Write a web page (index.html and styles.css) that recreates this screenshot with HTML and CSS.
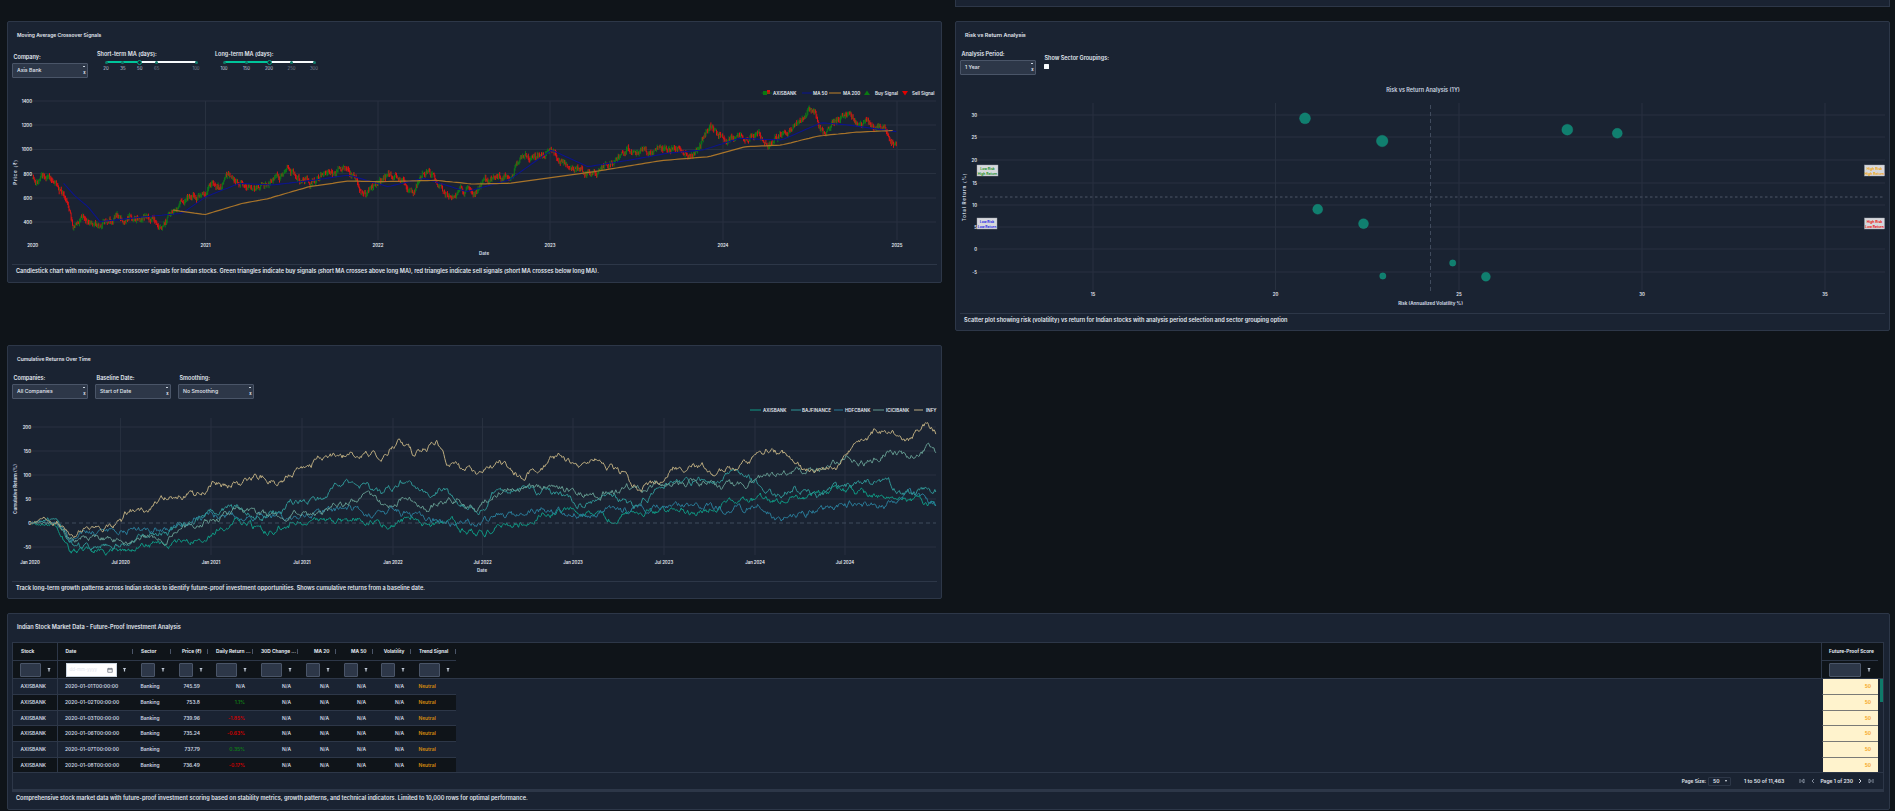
FILE: index.html
```html
<!DOCTYPE html>
<html lang="en">
<head>
<meta charset="utf-8">
<title>Indian Stock Market Dashboard</title>
<link rel="stylesheet" href="styles.css">
</head>
<body>
<main class="layout">
  <div></div>
  <div class="panel-stub"></div>

  <section class="panel panel-signals">
    <h3 class="panel-title">Moving Average Crossover Signals</h3>
    <div class="controls">
      <div class="field field-low">
        <label class="label">Company:</label>
        <div class="select">Axis Bank<span class="select-caret"></span><span class="select-clear">x</span></div>
      </div>
      <div class="slider-field">
        <label class="label">Short-term MA (days):</label>
        <div class="slider">
          <div class="slider-track"><div class="slider-fill" style="width:37.5%"></div>
            <i class="dot" style="left:0"></i><i class="dot" style="left:18.75%"></i><i class="dot" style="left:56.25%"></i><i class="dot" style="left:100%"></i><i class="handle" style="left:37.5%"></i>
          </div>
          <div class="ticks"><span style="left:0">20</span><span style="left:18.75%">35</span><span style="left:37.5%">50</span><span class="tick-dim" style="left:56.25%">65</span><span class="tick-dim" style="left:100%">100</span></div>
        </div>
      </div>
      <div class="slider-field">
        <label class="label">Long-term MA (days):</label>
        <div class="slider">
          <div class="slider-track"><div class="slider-fill" style="width:50%"></div>
            <i class="dot" style="left:0"></i><i class="dot" style="left:25%"></i><i class="dot" style="left:75%"></i><i class="dot" style="left:100%"></i><i class="handle" style="left:50%"></i>
          </div>
          <div class="ticks"><span style="left:0">100</span><span style="left:25%">150</span><span style="left:50%">200</span><span class="tick-dim" style="left:75%">250</span><span class="tick-dim" style="left:100%">300</span></div>
        </div>
      </div>
    </div>
    <svg class="chart chart-signals" viewBox="12 79 925 185">
      <g class="grid">
        <path d="M32 101H936M32 125H936M32 149.500H936M32 173.500H936M32 198H936M32 222H936"/>
        <path d="M205.500 101V240M378 101V240M550 101V240M723 101V240M897 101V240"/>
      </g>
      <g class="tick-text" text-anchor="end">
        <text x="32" y="103">1400</text><text x="32" y="127">1200</text><text x="32" y="151">1000</text><text x="32" y="175.500">800</text><text x="32" y="200">600</text><text x="32" y="224">400</text>
      </g>
      <g class="tick-text" text-anchor="middle">
        <text x="32.700" y="247">2020</text><text x="205.500" y="247">2021</text><text x="378" y="247">2022</text><text x="550" y="247">2023</text><text x="723" y="247">2024</text><text x="897" y="247">2025</text>
      </g>
      <text class="axis-title" x="484" y="255" text-anchor="middle">Date</text>
      <text class="axis-title axis-wide" transform="translate(17 172) rotate(-90)" text-anchor="middle">Price (₹)</text>
      <g id="candles"></g>
      <polyline id="ma50" class="line-ma50"/>
      <polyline id="ma200" class="line-ma200"/>
      <g class="legend">
        <path class="leg-up" d="M763 91h4v4h-4z"/><path class="leg-down" d="M767 90h3v4h-3z"/><path class="leg-stem" d="M761.500 93H772"/>
        <text x="773" y="95">AXISBANK</text>
        <path class="line-ma50" d="M802 93H812"/><text x="813" y="95">MA 50</text>
        <path class="line-ma200" d="M829 93H841"/><text x="843" y="95">MA 200</text>
        <path class="buy" d="M867 90.500l3 4.500h-6z"/><text x="875" y="95">Buy Signal</text>
        <path class="sell" d="M905 95.500l-3-4.500h6z"/><text x="912" y="95">Sell Signal</text>
      </g>
    </svg>
    <p class="caption">Candlestick chart with moving average crossover signals for Indian stocks. Green triangles indicate buy signals (short MA crosses above long MA), red triangles indicate sell signals (short MA crosses below long MA).</p>
  </section>

  <section class="panel">
    <h3 class="panel-title title-md">Risk vs Return Analysis</h3>
    <div class="controls">
      <div class="field">
        <label class="label">Analysis Period:</label>
        <div class="select">1 Year<span class="select-caret"></span><span class="select-clear">x</span></div>
      </div>
      <div class="field field-check">
        <label class="label">Show Sector Groupings:</label>
        <span class="checkbox"></span>
      </div>
    </div>
    <svg class="chart chart-risk" viewBox="960 75 925 238">
      <g class="grid">
        <path d="M978 115H1885M978 137H1885M978 160H1885M978 183H1885M978 205H1885M978 227H1885M978 249H1885M978 272H1885"/>
        <path d="M1093 103V290M1275.500 103V290M1459 103V290M1642 103V290M1825 103V290"/>
      </g>
      <path class="ref-v" d="M1430.500 105V291"/>
      <path class="ref-h" d="M980 197H1885"/>
      <g class="tick-text" text-anchor="end">
        <text x="977" y="117">30</text><text x="977" y="139">25</text><text x="977" y="162">20</text><text x="977" y="185">15</text><text x="977" y="207">10</text><text x="977" y="229">5</text><text x="977" y="251">0</text><text x="977" y="274">-5</text>
      </g>
      <g class="tick-text" text-anchor="middle">
        <text x="1093" y="296">15</text><text x="1275.500" y="296">20</text><text x="1459" y="296">25</text><text x="1642" y="296">30</text><text x="1825" y="296">35</text>
      </g>
      <text class="axis-title" x="1430.500" y="305" text-anchor="middle">Risk (Annualized Volatility %)</text>
      <text class="axis-title axis-wide" transform="translate(966 197) rotate(-90)" text-anchor="middle">Total Return (%)</text>
      <text class="chart-title" x="1423" y="92" text-anchor="middle">Risk vs Return Analysis (1Y)</text>
      <g class="bubbles">
        <circle cx="1305" cy="118.300" r="5.500"/><circle cx="1382.200" cy="141" r="5.800"/><circle cx="1567.300" cy="129.700" r="5.500"/><circle cx="1617.300" cy="133.300" r="5"/>
        <circle cx="1317.700" cy="209.300" r="5"/><circle cx="1363.500" cy="223.700" r="5"/><circle cx="1452.700" cy="263" r="3.200"/><circle cx="1382.800" cy="276" r="3.200"/><circle cx="1485.900" cy="276.700" r="4.500"/>
      </g>
      <g class="note note-green"><rect x="977" y="165" width="21" height="11"/><text x="987.500" y="169.500">Low Risk</text><text x="987.500" y="174.500">High Return</text></g>
      <g class="note note-blue"><rect x="977" y="218" width="20" height="11"/><text x="987" y="222.500">Low Risk</text><text x="987" y="227.500">Low Return</text></g>
      <g class="note note-orange"><rect x="1864.500" y="165" width="20" height="11"/><text x="1874.500" y="169.500">High Risk</text><text x="1874.500" y="174.500">High Return</text></g>
      <g class="note note-red"><rect x="1864.500" y="218" width="20" height="11"/><text x="1874.500" y="222.500">High Risk</text><text x="1874.500" y="227.500">Low Return</text></g>
    </svg>
    <p class="caption">Scatter plot showing risk (volatility) vs return for Indian stocks with analysis period selection and sector grouping option</p>
  </section>

  <section class="panel">
    <h3 class="panel-title">Cumulative Returns Over Time</h3>
    <div class="controls">
      <div class="field"><label class="label">Companies:</label><div class="select">All Companies<span class="select-caret"></span><span class="select-clear">x</span></div></div>
      <div class="field"><label class="label">Baseline Date:</label><div class="select">Start of Date<span class="select-caret"></span><span class="select-clear">x</span></div></div>
      <div class="field"><label class="label">Smoothing:</label><div class="select">No Smoothing<span class="select-caret"></span><span class="select-clear">x</span></div></div>
    </div>
    <svg class="chart chart-returns" viewBox="12 399 925 182">
      <g class="grid">
        <path d="M32 427H936M32 451H936M32 475H936M32 499H936M32 547H936"/>
        <path d="M120.600 418V555M211 418V555M302 418V555M393 418V555M482.500 418V555M573 418V555M664 418V555M755 418V555M845 418V555"/>
      </g>
      <g class="tick-text" text-anchor="end">
        <text x="31" y="429">200</text><text x="31" y="453">150</text><text x="31" y="477">100</text><text x="31" y="501">50</text><text x="31" y="525">0</text><text x="31" y="549">-50</text>
      </g>
      <g class="tick-text" text-anchor="middle">
        <text x="30" y="564">Jan 2020</text><text x="120.600" y="564">Jul 2020</text><text x="211" y="564">Jan 2021</text><text x="302" y="564">Jul 2021</text><text x="393" y="564">Jan 2022</text><text x="482.500" y="564">Jul 2022</text><text x="573" y="564">Jan 2023</text><text x="664" y="564">Jul 2023</text><text x="755" y="564">Jan 2024</text><text x="845" y="564">Jul 2024</text>
      </g>
      <text class="axis-title" x="482" y="572" text-anchor="middle">Date</text>
      <text class="axis-title" transform="translate(17 489) rotate(-90)" text-anchor="middle">Cumulative Return (%)</text>
      <polyline id="r-axis" class="r-line r-axis"/>
      <polyline id="r-hdfc" class="r-line r-hdfc"/>
      <polyline id="r-baj" class="r-line r-baj"/>
      <polyline id="r-icici" class="r-line r-icici"/>
      <polyline id="r-infy" class="r-line r-infy"/>
      <path class="zero" d="M30 523H936"/>
      <g class="legend">
        <path class="r-line r-axis" d="M750 410H761"/><text x="763" y="412">AXISBANK</text>
        <path class="r-line r-baj" d="M791 410H801"/><text x="802" y="412">BAJFINANCE</text>
        <path class="r-line r-hdfc" d="M834 410H843"/><text x="845" y="412">HDFCBANK</text>
        <path class="r-line r-icici" d="M873 410H884"/><text x="886" y="412">ICICIBANK</text>
        <path class="r-line r-infy" d="M914 410H923"/><text x="926" y="412">INFY</text>
      </g>
    </svg>
    <p class="caption">Track long-term growth patterns across Indian stocks to identify future-proof investment opportunities. Shows cumulative returns from a baseline date.</p>
  </section>
  <div></div>

  <section class="panel panel-wide">
    <h3 class="panel-title title-lg">Indian Stock Market Data - Future-Proof Investment Analysis</h3>
    <div class="data-grid">
      <div class="cols head-row">
        <div class="hcell pin">Stock</div><div class="hcell sep">Date</div><div class="hcell sep">Sector</div><div class="hcell sep num">Price (₹)</div><div class="hcell sep">Daily Return ...</div><div class="hcell sep">30D Change ...</div><div class="hcell sep num">MA 20</div><div class="hcell sep num">MA 50</div><div class="hcell sep num">Volatility</div><div class="hcell sep">Trend Signal</div>
        <div></div><div class="hcell score-head">Future-Proof Score</div><div></div>
      </div>
      <div class="cols filter-row">
        <div class="fcell pin"><input class="finput fw-21" aria-label="Stock"><i class="funnel"></i></div>
        <div class="fcell"><div class="date-input"><span>dd-mm-yyyy</span><svg viewBox="0 0 8 8" class="cal"><path d="M1 2h6v5H1zM1 3.500h6M2.500 1v1M5.500 1v1"/></svg></div><i class="funnel"></i></div>
        <div class="fcell"><input class="finput fw-14" aria-label="Sector"><i class="funnel"></i></div>
        <div class="fcell"><input class="finput fw-14" aria-label="Price"><i class="funnel"></i></div>
        <div class="fcell"><input class="finput fw-21" aria-label="Daily Return"><i class="funnel"></i></div>
        <div class="fcell"><input class="finput fw-21" aria-label="30D Change"><i class="funnel"></i></div>
        <div class="fcell"><input class="finput fw-14" aria-label="MA 20"><i class="funnel"></i></div>
        <div class="fcell"><input class="finput fw-14" aria-label="MA 50"><i class="funnel"></i></div>
        <div class="fcell"><input class="finput fw-14" aria-label="Volatility"><i class="funnel"></i></div>
        <div class="fcell"><input class="finput fw-21" aria-label="Trend Signal"><i class="funnel"></i></div>
        <div></div>
        <div class="fcell score-filter"><input class="finput fw-32" aria-label="Score"><i class="funnel"></i></div>
        <div></div>
      </div>
      <div class="grid-body">
        <div class="rows">
          <div class="cols-body">
            <div class="cell pin">AXISBANK</div><div class="cell">2020-01-01T00:00:00</div><div class="cell">Banking</div><div class="cell num">745.59</div><div class="cell num">N/A</div><div class="cell num">N/A</div><div class="cell num">N/A</div><div class="cell num">N/A</div><div class="cell num">N/A</div><div class="cell neutral">Neutral</div><div></div><div class="score">50</div>
          </div>
          <div class="cols-body dark">
            <div class="cell pin">AXISBANK</div><div class="cell">2020-01-02T00:00:00</div><div class="cell">Banking</div><div class="cell num">753.8</div><div class="cell num up">1.1%</div><div class="cell num">N/A</div><div class="cell num">N/A</div><div class="cell num">N/A</div><div class="cell num">N/A</div><div class="cell neutral">Neutral</div><div></div><div class="score">50</div>
          </div>
          <div class="cols-body">
            <div class="cell pin">AXISBANK</div><div class="cell">2020-01-03T00:00:00</div><div class="cell">Banking</div><div class="cell num">739.96</div><div class="cell num down">-1.85%</div><div class="cell num">N/A</div><div class="cell num">N/A</div><div class="cell num">N/A</div><div class="cell num">N/A</div><div class="cell neutral">Neutral</div><div></div><div class="score">50</div>
          </div>
          <div class="cols-body dark">
            <div class="cell pin">AXISBANK</div><div class="cell">2020-01-06T00:00:00</div><div class="cell">Banking</div><div class="cell num">735.24</div><div class="cell num down">-0.63%</div><div class="cell num">N/A</div><div class="cell num">N/A</div><div class="cell num">N/A</div><div class="cell num">N/A</div><div class="cell neutral">Neutral</div><div></div><div class="score">50</div>
          </div>
          <div class="cols-body">
            <div class="cell pin">AXISBANK</div><div class="cell">2020-01-07T00:00:00</div><div class="cell">Banking</div><div class="cell num">737.79</div><div class="cell num up">0.35%</div><div class="cell num">N/A</div><div class="cell num">N/A</div><div class="cell num">N/A</div><div class="cell num">N/A</div><div class="cell neutral">Neutral</div><div></div><div class="score">50</div>
          </div>
          <div class="cols-body dark">
            <div class="cell pin">AXISBANK</div><div class="cell">2020-01-08T00:00:00</div><div class="cell">Banking</div><div class="cell num">736.49</div><div class="cell num down">-0.17%</div><div class="cell num">N/A</div><div class="cell num">N/A</div><div class="cell num">N/A</div><div class="cell num">N/A</div><div class="cell neutral">Neutral</div><div></div><div class="score">50</div>
          </div>
        </div>
        <div class="scrollbar"><div class="scroll-thumb"></div></div>
      </div>
      <div class="pager">
        <span class="pg-label">Page Size:</span>
        <span class="pg-select">50<i class="pg-caret"></i></span>
        <span class="pg-range">1 to 50 of 11,463</span>
        <svg class="pg-icon dim" viewBox="0 0 6 6"><path d="M1 1v4M5 1L2.500 3 5 5z"/></svg>
        <svg class="pg-icon dim" viewBox="0 0 6 6"><path d="M4 1L2 3l2 2"/></svg>
        <span class="pg-page">Page 1 of 230</span>
        <svg class="pg-icon" viewBox="0 0 6 6"><path d="M2 1l2 2-2 2"/></svg>
        <svg class="pg-icon dim" viewBox="0 0 6 6"><path d="M5 1v4M1 1l2.500 2L1 5z"/></svg>
      </div>
    </div>
    <p class="caption caption-flat">Comprehensive stock market data with future-proof investment scoring based on stability metrics, growth patterns, and technical indicators. Limited to 10,000 rows for optimal performance.</p>
  </section>
</main>
<script src="charts.js"></script>
</body>
</html>
```
FILE: styles.css
```css
* { box-sizing: border-box; }
html, body { margin: 0; background: #0f1419; }
body { font-family: Inter, "Liberation Sans", sans-serif; color: #e2e8f0; overflow: hidden; height: 811px; }
.layout { display: grid; grid-template-columns: 1fr 1fr; gap: 14px 13px; padding: 0 5px 0 7px; align-items: start; }
.panel-stub { height: 7px; background: #1a2332; border: 1px solid #2d3748; border-top: 0; }
.panel { background: #1a2332; border: 1px solid #2d3748; border-radius: 2px; padding: 9px 4px 0; }
.panel-signals { height: 262px; }
.panel-wide { grid-column: 1 / -1; }
.panel-title { margin: 0 0 11px 5px; font-size: 5px; line-height: 8px; font-weight: 600; color: #e2e8f0; }
.title-md { font-size: 5.400px; }
.title-lg { font-size: 5.600px; }
.controls { display: flex; gap: 7px; }
.field { width: 76px; }
.field-low { padding-top: 3px; margin-right: 2px; }
.field-check { padding-top: 4px; width: auto; }
.label { display: block; font-size: 5.500px; line-height: 8px; font-weight: 600; margin: 0 0 2px 1.500px; color: #e2e8f0; }
.select { position: relative; height: 15px; background: #2d3748; border: 1px solid #4a5568; border-radius: 1px; font-size: 5.200px; line-height: 13px; padding-left: 4px; font-weight: 500; color: #e2e8f0; }
.select-caret { position: absolute; right: 2px; top: 2px; width: 2px; height: 1px; background: #cbd5e0; }
.select-clear { position: absolute; right: 1.500px; top: 7px; font-size: 4px; line-height: 4px; font-weight: 700; color: #e2e8f0; }
.checkbox { display: block; width: 5px; height: 5px; margin: 1px 0 0 1px; background: #f7fafc; border-radius: 0.500px; }
.slider-field { width: 111px; height: 29px; }
.slider-field .label { margin: 0 0 3px; }
.slider { margin-left: 9px; width: 90px; }
.slider-track { position: relative; height: 2px; background: #f7fafc; border-radius: 1px; }
.slider-fill { height: 2px; background: #00c49a; }
.dot { position: absolute; top: -0.500px; width: 3px; height: 3px; margin-left: -1.500px; border-radius: 50%; background: #0f7a6a; }
.handle { position: absolute; top: -1.500px; width: 5px; height: 5px; margin-left: -2.500px; border-radius: 50%; background: #1a2332; border: 1px solid #00a887; }
.ticks { position: relative; height: 6px; margin-top: 2.500px; font-size: 4.300px; line-height: 6px; color: #cbd5e0; }
.ticks span { position: absolute; transform: translateX(-50%); }
.ticks .tick-dim { color: #7c8696; }
.chart { display: block; width: 925px; overflow: visible; }
.chart-signals { height: 185px; }
.chart-risk { height: 238px; }
.chart-returns { height: 182px; }
.chart text { font-family: Inter, "Liberation Sans", sans-serif; }
.grid path { fill: none; stroke: #283140; stroke-width: 1; }
.tick-text { font-size: 4.300px; font-weight: 600; fill: #e2e8f0; }
.axis-title { font-size: 4.500px; font-weight: 700; fill: #cbd5e0; }
.axis-wide { letter-spacing: .8px; }
.chart-title { font-size: 5.500px; font-weight: 600; fill: #cbd5e0; }
.legend text { font-size: 4.500px; font-weight: 600; fill: #e2e8f0; }
.leg-up { fill: #0a7a12; }
.leg-down { fill: #d81010; }
.leg-stem { stroke: #0a7a12; stroke-width: 0.700; fill: none; }
.line-ma50 { fill: none; stroke: #0c148c; stroke-width: 1.100; }
.line-ma200 { fill: none; stroke: #a8742a; stroke-width: 1.200; }
.buy { fill: #0a7a12; }
.sell { fill: #e00000; }
.candle-up { stroke: #0f7c16; stroke-width: 0.950; }
.candle-down { stroke: #e21212; stroke-width: 0.950; }
.ref-v { fill: none; stroke: #4a5568; stroke-width: 0.800; stroke-dasharray: 4 3; }
.ref-h { fill: none; stroke: #3c4656; stroke-width: 1.500; stroke-dasharray: 2.500 2.500; }
.bubbles circle { fill: #0f8a75; fill-opacity: .9; stroke: #1aa38d; stroke-opacity: .4; stroke-width: .6; }
.note rect { fill: #d6d8dc; stroke: #a0a6b0; stroke-width: .4; }
.note text { font-size: 3.400px; font-weight: 600; text-anchor: middle; }
.note-green text { fill: #0a8a12; }
.note-blue text { fill: #1212e8; }
.note-orange text { fill: #f5a200; }
.note-red text { fill: #ee0000; }
.r-line { fill: none; stroke-width: 1; }
.r-axis { stroke: #0f9a85; }
.r-baj { stroke: #2f9696; }
.r-hdfc { stroke: #2a7d9a; }
.r-icici { stroke: #649a90; }
.r-infy { stroke: #bcac80; }
.zero { fill: none; stroke: #4a5568; stroke-width: .8; stroke-dasharray: 4 3; }
.caption { margin: 0; border-top: 1px solid #2d3748; padding: 2px 0 6px 4px; font-size: 5.600px; line-height: 8px; font-weight: 600; color: #e2e8f0; }
.caption-flat { border-top: 0; padding-bottom: 7px; }
.data-grid { border: 1px solid #2d3748; height: 150px; display: flex; flex-direction: column; margin-right: 1px; }
.cols, .cols-body { display: grid; grid-template-columns: 44.500px 75.500px 38px 37px 45px 45px 38px 37px 38px 45px 1fr 57px 5px; }
.cols-body { grid-template-columns: 44.500px 75.500px 38px 37px 45px 45px 38px 37px 38px 45px 1fr 56px; height: 15.800px; }
.head-row { height: 18px; background: #0f1419; }
.filter-row { height: 18px; background: #0f1419; border-bottom: 1px solid #2d3748; }
.head-row > .hcell { border-bottom: 1px solid #2d3748; }
.hcell { position: relative; font-size: 4.800px; line-height: 17px; font-weight: 700; color: #e2e8f0; padding: 0 2px 0 8px; white-space: nowrap; }
.hcell.num { text-align: right; padding: 0 6.500px 0 0; }
.sep::after { content: ""; position: absolute; right: 0; top: 6px; width: 1px; height: 5px; background: #4a5568; }
.pin { border-right: 1px solid #2d3748; }
.score-head { border-left: 1px solid #2d3748; padding: 0 0 0 7px; }
.fcell { display: flex; align-items: center; padding-left: 8px; height: 17px; }
.fcell.pin { padding-left: 7px; }
.score-filter { border-left: 1px solid #2d3748; padding-left: 7px; }
.finput { height: 14px; padding: 0; background: #2d3748; border: 1px solid #4a5568; border-radius: 1px; flex: none; }
.fw-14 { width: 14px; }
.fw-21 { width: 21px; }
.fw-32 { width: 32px; }
.funnel { flex: none; width: 4px; height: 4px; margin-left: 6px; background: #c3ccd9; clip-path: polygon(0 0, 100% 0, 65% 50%, 65% 100%, 35% 100%, 35% 50%); }
.date-input { flex: none; width: 51px; height: 14px; background: #fff; border: 1px solid #cbd5e0; display: flex; align-items: center; justify-content: space-between; padding: 0 3px; font-size: 4.500px; color: #dfe6ee; }
.cal { width: 6px; height: 6px; fill: none; stroke: #5a6270; stroke-width: .9; }
.grid-body { height: 93px; overflow: hidden; display: flex; }
.rows { flex: 1; min-width: 0; }
.cell { font-size: 4.900px; line-height: 14.800px; font-weight: 600; padding: 0 8px 0 7.500px; color: #cbd5e0; border-bottom: 1px solid #2d3748; white-space: nowrap; }
.cell.num { text-align: right; padding: 0 8px 0 0; }
.cols-body > .cell:nth-child(n+6).num { padding-right: 7px; }
.dark .cell { background: #0f1419; }
.up { color: #0f7c16 !important; }
.down { color: #d40000 !important; }
.neutral { color: #d68a0e; }
.score { background: #fff3cd; border-bottom: 1px solid #7a7a76; border-left: 1px solid #1a2332; font-size: 4.800px; line-height: 14.800px; font-weight: 700; text-align: right; padding-right: 7px; color: #f5a623; }
.scrollbar { width: 5px; flex: none; padding-left: 2px; }
.scroll-thumb { width: 3px; height: 23px; background: #0f7a6a; }
.pager { flex: 1; border-top: 1px solid #2d3748; border-bottom: 2px solid #2d3748; display: flex; align-items: center; justify-content: flex-end; padding-right: 6.500px; font-size: 5px; font-weight: 600; color: #e2e8f0; }
.pg-label { font-size: 4.800px; }
.pg-select { display: flex; align-items: center; justify-content: space-between; width: 23px; height: 9px; margin: 0 13px 0 2px; padding: 0 3px 0 4px; border: 1px solid #2d3748; border-radius: 1px; }
.pg-caret { width: 0; height: 0; border: 1.500px solid transparent; border-top: 2px solid #e2e8f0; border-bottom: 0; }
.pg-range { margin-right: 12.500px; font-size: 5.200px; }
.pg-page { margin: 0 1.500px; }
.pg-icon { width: 6px; height: 6px; margin: 0 2.500px; fill: none; stroke: #e2e8f0; stroke-width: .9; }
.pg-icon.dim { stroke: #8b95a5; }
```
FILE: charts.js
```js
(function () {
  var seed = 12345;
  function rnd() {
    seed = (seed * 1664525 + 1013904223) >>> 0;
    return seed / 4294967296;
  }
  // Reference traces are kept as [x, y] on a 1.65x-wide, 3x-tall grid.
  function lerp(pts, x) {
    for (var i = 1; i < pts.length; i++) {
      if (x <= pts[i][0]) {
        var a = pts[i - 1], b = pts[i];
        return a[1] + (b[1] - a[1]) * (x - a[0]) / (b[0] - a[0]);
      }
    }
    return pts[pts.length - 1][1];
  }
  function line(id, pts, offY, noise, step) {
    var out = [], dev = 0, start = pts[0][0], end = pts[pts.length - 1][0];
    for (var x = start; x <= end; x += step) {
      if (noise) {
        dev = dev * 0.85 + (rnd() - 0.5) * noise;
      }
      var amp = noise ? Math.min(1, (x - start) / 60 + 0.25) : 1;
      var px = x / 1.65, py = offY + (lerp(pts, x) + dev * amp) / 3;
      out.push(px.toFixed(1) + ',' + py.toFixed(1));
    }
    document.getElementById(id).setAttribute('points', out.join(' '));
  }

  var price = [[54,540],[95,545],[105,580],[118,660],[120,700],[135,650],[165,685],[180,660],[240,640],[262,660],[300,585],[330,595],[375,530],[420,570],[450,545],[520,535],[570,510],[600,575],[650,520],[680,565],[705,525],[730,580],[760,585],[825,520],[840,540],[855,480],[915,462],[930,490],[970,515],[1040,455],[1090,465],[1120,440],[1145,460],[1170,400],[1215,425],[1245,410],[1260,440],[1280,420],[1300,395],[1345,330],[1360,400],[1400,345],[1415,385],[1460,385],[1480,430]];
  var ma50 = [[105,550],[125,590],[145,620],[165,665],[240,650],[300,640],[340,590],[395,550],[450,555],[520,540],[575,525],[640,560],[700,535],[770,575],[840,540],[910,450],[970,500],[1040,480],[1100,460],[1160,450],[1220,415],[1290,420],[1355,368],[1400,375],[1480,395]];
  var ma200 = [[285,630],[338,644],[400,610],[440,597],[510,560],[575,543],[630,545],[720,541],[780,552],[840,550],[900,535],[980,515],[1090,482],[1170,470],[1230,440],[1290,435],[1350,408],[1410,397],[1478,391]];

  var svgNS = 'http://www.w3.org/2000/svg';
  var g = document.getElementById('candles');
  var prev = null, dev = 0;
  for (var x = 54; x <= 1480; x += 1.15) {
    dev = dev * 0.9 + (rnd() - 0.5) * 16;
    var close = (lerp(price, x) + dev) / 3;
    var open = prev === null ? close : prev;
    var hi = Math.min(open, close) - rnd() * 3;
    var lo = Math.max(open, close) + rnd() * 3;
    var px = (x / 1.65).toFixed(1);
    var el = document.createElementNS(svgNS, 'path');
    el.setAttribute('class', close <= open ? 'candle-up' : 'candle-down');
    el.setAttribute('d', 'M' + px + ' ' + hi.toFixed(1) + 'V' + lo.toFixed(1));
    g.appendChild(el);
    prev = close;
  }
  line('ma50', ma50, 0, 0, 6);
  line('ma200', ma200, 0, 0, 6);

  var series = {
    'r-infy': [[50,550],[95,540],[115,590],[135,565],[200,545],[215,505],[250,510],[285,470],[320,465],[355,425],[375,440],[430,410],[460,430],[495,378],[540,345],[590,345],[625,345],[660,298],[680,345],[720,308],[740,375],[785,405],[825,365],[860,410],[920,350],[960,380],[985,360],[1030,400],[1040,440],[1100,420],[1110,385],[1160,378],[1195,395],[1235,365],[1265,330],[1305,345],[1330,385],[1380,385],[1415,290],[1425,310],[1445,270],[1480,275],[1495,305],[1530,258],[1545,280]],
    'r-icici': [[50,550],[95,545],[115,595],[170,600],[250,600],[300,580],[340,545],[390,510],[440,535],[490,520],[540,510],[595,470],[640,500],[665,470],[705,515],[740,470],[785,510],[830,450],[860,440],[920,440],[970,465],[1040,445],[1100,430],[1140,430],[1200,440],[1240,430],[1300,395],[1370,385],[1400,350],[1430,365],[1465,330],[1490,350],[1530,325],[1545,340]],
    'r-baj': [[50,550],[90,530],[115,610],[160,625],[240,590],[300,570],[340,515],[390,505],[440,540],[480,485],[530,475],[570,425],[630,460],[660,425],[700,465],[730,440],[760,500],[790,510],[825,440],[870,440],[960,490],[1000,470],[1050,500],[1100,430],[1170,415],[1230,410],[1280,465],[1310,440],[1350,470],[1400,440],[1465,425],[1490,460],[1545,455]],
    'r-hdfc': [[50,550],[95,550],[115,595],[180,570],[270,570],[340,530],[440,530],[550,520],[590,505],[620,525],[650,515],[710,545],[790,545],[860,525],[910,505],[960,520],[1000,505],[1100,500],[1170,495],[1200,515],[1250,495],[1280,530],[1350,515],[1400,490],[1450,500],[1520,470],[1545,490]],
    'r-axis': [[50,550],[95,555],[115,630],[165,630],[270,615],[370,570],[390,545],[435,570],[480,550],[590,540],[630,555],[680,540],[705,565],[740,545],[790,575],[870,540],[910,515],[960,510],[1010,535],[1070,505],[1150,515],[1220,480],[1260,480],[1300,490],[1350,460],[1400,450],[1440,470],[1545,490]]
  };
  Object.keys(series).forEach(function (id) {
    line(id, series[id], 340, 15, 1.5);
  });
})();
```
